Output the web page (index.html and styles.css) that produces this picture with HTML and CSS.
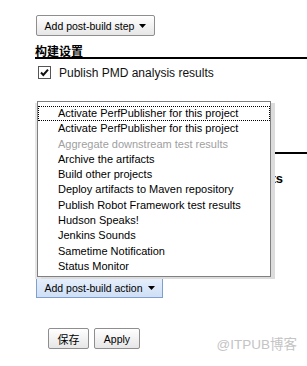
FILE: index.html
```html
<!DOCTYPE html>
<html lang="zh">

<head>
    <meta charset="UTF-8" />
    <title>构建设置</title>
    <link rel="stylesheet" href="styles.css">
</head>

<body>
    <main class="page">
        <button class="btn btn-step" type="button">Add post-build step
            <svg class="arrow" width="7" height="4" viewBox="0 0 7 4"><path d="M0 0h7L3.5 4z" /></svg>
        </button>

        <h2 class="section-title">构建设置</h2>
        <div class="check-row">
            <svg class="checkbox" width="13" height="13" viewBox="0 0 13 13">
                <rect x="0.5" y="0.5" width="12" height="12" fill="#fff" stroke="#555" />
                <path d="M3 6.5l2.3 2.4L10 3.6" fill="none" stroke="#111" stroke-width="2" />
            </svg>
            <span class="check-label">Publish PMD analysis results</span>
        </div>

        <section class="post-build">
            <h2 class="section-title">构建后操作</h2>
            <div class="hidden-row">Aggregate downstream test results</div>
        </section>

        <button class="btn btn-action" type="button">Add post-build action
            <svg class="arrow" width="7" height="4" viewBox="0 0 7 4"><path d="M0 0h7L3.5 4z" /></svg>
        </button>

        <div class="form-buttons">
            <button class="btn btn-save" type="button">保存</button>
            <button class="btn btn-apply" type="button">Apply</button>
        </div>

        <ul class="menu">
            <li class="menu-item focused">Activate PerfPublisher for this project</li>
            <li class="menu-item">Activate PerfPublisher for this project</li>
            <li class="menu-item disabled">Aggregate downstream test results</li>
            <li class="menu-item">Archive the artifacts</li>
            <li class="menu-item">Build other projects</li>
            <li class="menu-item">Deploy artifacts to Maven repository</li>
            <li class="menu-item">Publish Robot Framework test results</li>
            <li class="menu-item">Hudson Speaks!</li>
            <li class="menu-item">Jenkins Sounds</li>
            <li class="menu-item">Sametime Notification</li>
            <li class="menu-item">Status Monitor</li>
        </ul>

        <div class="watermark">@ITPUB博客</div>
    </main>
</body>

</html>
```

FILE: styles.css
```css
body {
    margin: 0;
    background: #fff;
    font-family: "Liberation Sans", Arial, sans-serif;
    color: #000;
}

.page {
    position: relative;
    height: 366px;
    padding: 15px 0 0 35px;
    box-sizing: border-box;
    overflow: hidden;
}

.btn {
    display: flex;
    align-items: center;
    justify-content: center;
    gap: 5px;
    height: 21px;
    padding: 0;
    font-family: "Liberation Sans", Arial, "Noto Sans CJK SC", sans-serif;
    font-size: 10.5px;
    color: #000;
    background: linear-gradient(#fff, #e6e6e6);
    border: 1px solid #8e8e8e;
    border-radius: 2px;
}

.arrow {
    fill: #000;
}

.btn-step {
    margin-left: 1px;
    width: 119px;
}

.section-title {
    margin: 8px 0 0;
    font-family: "Noto Sans CJK SC", sans-serif;
    font-size: 12px;
    line-height: 13px;
    font-weight: bold;
    border-bottom: 2px solid #000;
}

.check-row {
    display: flex;
    align-items: center;
    gap: 8px;
    margin: 7px 0 0 3px;
    height: 13px;
}

.check-label {
    font-size: 12px;
    color: #111;
}

.post-build {
    height: 198px;
    padding-top: 60px;
    box-sizing: border-box;
}

.post-build .section-title {
    margin-top: 0;
}

.hidden-row {
    width: 248px;
    margin-top: 17px;
    text-align: right;
    font-size: 13px;
    font-weight: bold;
    white-space: nowrap;
}

.btn-action {
    margin: 0 0 0 1px;
    width: 127px;
    background: linear-gradient(#e6effb, #cfdff5);
    border-color: #7f9fcf;
    border-radius: 0;
}

.form-buttons {
    display: flex;
    gap: 5px;
    margin: 30px 0 0 13px;
}

.btn-save {
    width: 41px;
    font-size: 11px;
}

.btn-apply {
    width: 46px;
}

.menu {
    position: absolute;
    left: 37px;
    top: 101px;
    width: 232px;
    margin: 0;
    padding: 4px 0 2px;
    list-style: none;
    background: #fff;
    border: 1px solid #808080;
    box-shadow: 4px 2px 0 #dcdcdc, -2px 2px 0 #e6e6e6;
}

.menu-item {
    height: 15.3px;
    line-height: 15.3px;
    padding-left: 20px;
    font-size: 11px;
    color: #000;
    white-space: nowrap;
}

.menu-item.focused {
    outline: 1px dotted #000;
    outline-offset: -1px;
}

.menu-item.disabled {
    color: #a0a0a0;
}

.watermark {
    position: absolute;
    right: 10px;
    bottom: 13px;
    font-family: "Liberation Sans", "Noto Sans CJK SC", sans-serif;
    font-size: 13.5px;
    color: #c4c4c4;
}
```
